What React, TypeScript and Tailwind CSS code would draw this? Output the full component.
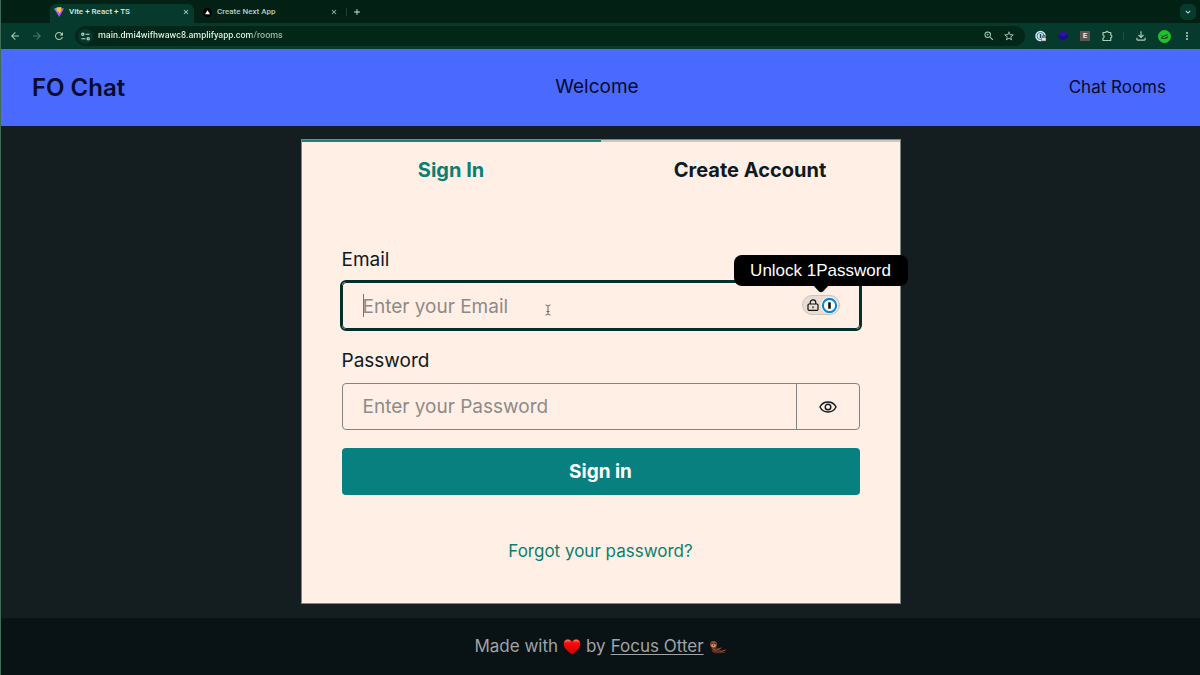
import React, { useState } from 'react';
import {
  MdAdd,
  MdArrowBack,
  MdArrowForward,
  MdClose,
  MdExpandMore,
  MdMoreVert,
  MdOutlineFileDownload,
  MdRefresh,
  MdStarBorder,
  MdZoomIn,
} from 'react-icons/md';

const ViteLogo = () => (
  <svg viewBox="0 0 20 20" className="size-[10px]" aria-hidden="true">
    <defs>
      <linearGradient id="vite" x1="0" y1="0" x2="0.6" y2="1">
        <stop offset="0" stopColor="#41c8ff" />
        <stop offset="0.5" stopColor="#9a5cf0" />
        <stop offset="1" stopColor="#d03cff" />
      </linearGradient>
    </defs>
    <path d="M0 3 L10 1 L20 3 L10.5 20 Z" fill="url(#vite)" />
    <path d="M5 1 L15 0 L13 6 L16 5.5 L9.5 15 L10 9 L6 9.5 Z" fill="#ffc61e" />
  </svg>
);

const NextLogo = () => (
  <svg viewBox="0 0 20 20" className="size-[9px]" aria-hidden="true">
    <circle cx="10" cy="10" r="10" fill="#000" />
    <path d="M10 5 L15.5 14 H4.5 Z" fill="#fff" />
  </svg>
);

const SiteInfoIcon = () => (
  <svg viewBox="0 0 20 20" className="size-[9px]" fill="none" stroke="#c3d6cb" strokeWidth="2.5" aria-hidden="true">
    <path d="M10 5 H19 M1 15 H10" />
    <circle cx="4" cy="5" r="2.5" />
    <circle cx="16" cy="15" r="2.5" />
  </svg>
);

const ExtensionIcon = () => (
  <svg viewBox="0 0 24 24" className="size-3" fill="none" stroke="#a9cdb8" strokeWidth="2.4" strokeLinejoin="round" aria-hidden="true">
    <path d="M4 5 H9.5 C9.5 2 14.5 2 14.5 5 H19.5 V10 C22.5 10 22.5 15 19.5 15 V21 H4 V16 C7 16 7 10 4 10 Z" />
  </svg>
);

const OnePasswordIcon = () => (
  <svg viewBox="0 0 24 24" className="size-3" aria-hidden="true">
    <circle cx="11" cy="12" r="10.5" fill="#d5eef5" />
    <circle cx="11" cy="12" r="7" fill="none" stroke="#2f7f94" strokeWidth="2" />
    <path d="M11 8 V16" stroke="#173e4c" strokeWidth="3" />
    <path d="M15 15 V13 A2.5 2.5 0 0 1 20 13 V15" fill="none" stroke="#33434a" strokeWidth="2" />
    <rect x="13" y="15" width="9" height="7" rx="1" fill="#e5e9ea" stroke="#33434a" strokeWidth="1" />
  </svg>
);

const HexIcon = () => (
  <svg viewBox="0 0 20 20" className="size-[10px]" aria-hidden="true">
    <path d="M10 1 L19 6 V14 L10 19 L1 14 V6 Z" fill="#1e0b86" />
    <path d="M10 1 L19 6 L10 11 L1 6 Z" fill="#3310b4" />
  </svg>
);

const Avatar = () => (
  <svg viewBox="0 0 26 26" className="size-[13px]" aria-hidden="true">
    <circle cx="13" cy="13" r="13" fill="#1fc22e" />
    <path d="M5 9 L10 12 L14 10 L20 8 L18 12 L21 15 L15 18 L8 18 L5 15 L9 14 Z" fill="#17521c" />
    <path d="M10 15 L17 13" stroke="#8bd892" strokeWidth="1.5" />
  </svg>
);

const LockIcon = () => (
  <svg viewBox="0 0 12 12" className="size-3" fill="none" stroke="#111" strokeWidth="1.2" aria-hidden="true">
    <rect x="1" y="5" width="10" height="6.3" rx="1" />
    <path d="M3.2 5 V3.6 A2.8 2.8 0 0 1 8.8 3.6 V5 M6 7.2 V9.2" />
  </svg>
);

const EyeIcon = () => (
  <svg viewBox="0 0 18 12" className="h-3 w-[18px]" fill="none" stroke="#0d1a1f" strokeWidth="1.4" aria-hidden="true">
    <path d="M1 6 C2.6 2.7 5.5 1 9 1 C12.5 1 15.4 2.7 17 6 C15.4 9.3 12.5 11 9 11 C5.5 11 2.6 9.3 1 6 Z" />
    <circle cx="9" cy="6" r="2.8" />
  </svg>
);

const HeartIcon = () => (
  <svg viewBox="0 0 24 22" className="h-4 w-[18px]" role="img" aria-label="love">
    <defs>
      <linearGradient id="heart" x1="0" y1="0" x2="0" y2="1">
        <stop offset="0" stopColor="#ff3b30" />
        <stop offset="0.3" stopColor="#f50a0a" />
        <stop offset="1" stopColor="#d60000" />
      </linearGradient>
    </defs>
    <path
      d="M12 21 C8 18 0.5 13.5 0.5 6.5 C0.5 2.5 3.5 0.5 6.5 0.5 C9 0.5 11 2 12 4 C13 2 15 0.5 17.5 0.5 C20.5 0.5 23.5 2.5 23.5 6.5 C23.5 13.5 16 18 12 21 Z"
      fill="url(#heart)"
    />
    <path d="M3 3.5 Q6 0.5 9 3 M15 3 Q18 0.5 21 3.5" fill="none" stroke="#ff9a92" strokeWidth="1.2" />
  </svg>
);

const OtterIcon = () => (
  <svg viewBox="0 0 36 26" className="h-[13px] w-[18px]" role="img" aria-label="otter">
    <path d="M9 11 C15 11 20 17 26 20 L34 23 L27 24 C20 25 9 25 7 22 C4 18 5 11 9 11 Z" fill="#5a3022" />
    <circle cx="9" cy="7" r="7" fill="#8a4b33" />
    <ellipse cx="9" cy="9" rx="4.5" ry="3.5" fill="#d39a78" />
    <circle cx="6" cy="5" r="1.2" fill="#1a0d08" />
    <circle cx="12" cy="5" r="1.2" fill="#1a0d08" />
    <ellipse cx="9" cy="8" rx="1.6" ry="1.1" fill="#1a0d08" />
    <path d="M8 15 L14 20 M17 17 L24 14 M24 21 L33 18" stroke="#a2583c" strokeWidth="2" strokeLinecap="round" />
  </svg>
);

const IBeam = () => (
  <svg viewBox="0 0 8 12" className="h-3 w-2" fill="none" stroke="#6b6764" strokeWidth="1" aria-hidden="true">
    <path d="M1.5 1 Q4 1 4 2.5 Q4 1 6.5 1 M4 2.5 V9.5 M1.5 11 Q4 11 4 9.5 Q4 11 6.5 11 M2.5 7.5 H5.5" />
  </svg>
);

const BrowserChrome: React.FC = () => (
  <div className="bg-[#022013] font-[Roboto,sans-serif] text-[#dbe9e1]">
    {/* Tab strip */}
    <div className="flex h-[23px] items-end pl-[49px] pr-1">
      <div className="flex h-[19px] w-[144px] items-center gap-1 rounded-t-md bg-[#053a2c] px-1 pb-[3px]">
        <button type="button" className="flex flex-1 items-center gap-[5px] text-[8px] font-medium">
          <ViteLogo />
          Vite + React + TS
        </button>
        <button type="button" aria-label="Close tab">
          <MdClose className="size-2" />
        </button>
      </div>
      <div className="flex h-[19px] w-[148px] items-center gap-1 pb-[3px] pl-[9px] pr-1">
        <button type="button" className="flex flex-1 items-center gap-[5px] text-[8px] font-medium text-[#b9cfc3]">
          <NextLogo />
          Create Next App
        </button>
        <button type="button" aria-label="Close tab">
          <MdClose className="size-2 text-[#b9cfc3]" />
        </button>
      </div>
      <div className="flex h-[19px] items-center gap-[5px] pb-[3px] pl-1">
        <span className="h-2 w-px bg-[#1c4233]" />
        <button type="button" aria-label="New tab">
          <MdAdd className="size-[10px]" />
        </button>
      </div>
      <button
        type="button"
        aria-label="Search tabs"
        className="mb-[3px] ml-auto flex size-4 items-center justify-center rounded-[5px] bg-[#053a2c]"
      >
        <MdExpandMore className="size-[10px]" />
      </button>
    </div>

    {/* Toolbar */}
    <div className="flex h-[26px] items-center gap-[10px] bg-[#053a2c] pl-2 pr-[7px]">
      <button type="button" aria-label="Back">
        <MdArrowBack className="size-3 text-[#a9cdb8]" />
      </button>
      <button type="button" aria-label="Forward">
        <MdArrowForward className="size-3 text-[#4c7766]" />
      </button>
      <button type="button" aria-label="Reload">
        <MdRefresh className="size-3 text-[#a9cdb8]" />
      </button>
      <div className="flex h-5 flex-1 items-center gap-[5px] rounded-full bg-[#022719] pl-[3px] pr-[10px]">
        <button
          type="button"
          aria-label="Site information"
          className="flex size-[15px] items-center justify-center rounded-full bg-[#05382a]"
        >
          <SiteInfoIcon />
        </button>
        <input
          type="text"
          aria-label="Address"
          defaultValue="main.dmi4wifhwawc8.amplifyapp.com/rooms"
          className="min-w-0 flex-1 bg-transparent bg-linear-to-r from-[#e6f1eb] from-[153px] to-[#9fbaac] to-[153px] bg-clip-text text-[9px] font-medium text-transparent outline-none"
        />
        <button type="button" aria-label="Zoom">
          <MdZoomIn className="size-3 text-[#a9cdb8]" />
        </button>
        <button type="button" aria-label="Bookmark" className="ml-[3px]">
          <MdStarBorder className="size-3 text-[#a9cdb8]" />
        </button>
      </div>
      <div className="flex items-center gap-[10px]">
        <button type="button" aria-label="1Password">
          <OnePasswordIcon />
        </button>
        <button type="button" aria-label="Extension" className="flex w-3 justify-center">
          <HexIcon />
        </button>
        <button
          type="button"
          className="mx-px flex size-[10px] items-center justify-center bg-[#5a5653] text-[8px] font-bold text-[#e5e2df]"
        >
          E
        </button>
        <button type="button" aria-label="Extensions">
          <ExtensionIcon />
        </button>
        <span className="h-2 w-px bg-[#1d5141]" />
        <button type="button" aria-label="Downloads">
          <MdOutlineFileDownload className="size-[14px] text-[#a9cdb8]" />
        </button>
        <button type="button" aria-label="Profile">
          <Avatar />
        </button>
        <button type="button" aria-label="Menu">
          <MdMoreVert className="size-3 text-[#a9cdb8]" />
        </button>
      </div>
    </div>
  </div>
);

const SignInCard: React.FC = () => {
  const [email, setEmail] = useState('');
  const [password, setPassword] = useState('');
  const [showPassword, setShowPassword] = useState(false);

  return (
    <div className="w-full max-w-[600px] border border-[#7c8588] bg-[#ffefe4] text-[#0d1a1f]">
      <div role="tablist" className="grid grid-cols-2 text-[20px] font-bold">
        <button
          type="button"
          role="tab"
          aria-selected="true"
          className="border-t-2 border-[#1f7f7a] pb-3 pt-[14px] leading-[28px] text-[#0a7f75]"
        >
          Sign In
        </button>
        <button
          type="button"
          role="tab"
          aria-selected="false"
          className="border-t-2 border-[#c9c8c6] pb-3 pt-[14px] leading-[28px]"
        >
          Create Account
        </button>
      </div>

      <form
        onSubmit={(e) => e.preventDefault()}
        className="flex flex-col gap-[18px] px-10 pb-[34px] pt-[50px] text-[19px] leading-[28px]"
      >
        <div className="flex flex-col gap-2">
          <label htmlFor="email">Email</label>
          <div className="relative">
            <input
              id="email"
              type="email"
              value={email}
              onChange={(e) => setEmail(e.target.value)}
              placeholder="Enter your Email"
              className="block h-[47px] w-full rounded-[4px] border border-[#04302c] px-5 pt-px outline-2 outline-[#04302c] placeholder:text-[#8d8b89]"
            />
            {/* Text caret and mouse pointer */}
            <span className="absolute left-[21px] top-3 h-[23px] w-px bg-[#77736f]" />
            <span className="absolute left-[202px] top-[22px]">
              <IBeam />
            </span>
            {/* 1Password badge */}
            <button
              type="button"
              aria-label="Unlock 1Password"
              className="absolute right-5 top-[13px] flex h-5 w-[38px] items-center justify-between rounded-full border border-[#cfc3bb] bg-[#eadcd3] pl-1 pr-px"
            >
              <LockIcon />
              <svg viewBox="0 0 32 32" className="size-[17px]" aria-hidden="true">
                <circle cx="16" cy="16" r="16" fill="#fff" />
                <circle cx="16" cy="16" r="12.5" fill="none" stroke="#0f84d2" strokeWidth="4" />
                <rect x="13.5" y="10" width="5" height="12" rx="1" fill="#10161c" />
              </svg>
            </button>
            <div
              role="tooltip"
              className="absolute -right-12 -top-[27px] flex h-[31px] w-[174px] items-center justify-center rounded-lg bg-black font-['Liberation_Sans',sans-serif] text-[17px] text-white"
            >
              Unlock 1Password
              <svg viewBox="0 0 16 8" className="absolute left-[79px] top-[30px] h-2 w-4" aria-hidden="true">
                <path d="M0 0 H16 L10 6.5 Q8 8 6 6.5 Z" fill="#000" />
              </svg>
            </div>
          </div>
        </div>

        <div className="flex flex-col gap-2">
          <label htmlFor="password">Password</label>
          <div className="flex h-[47px] rounded-[4px] border border-[#7f8587]">
            <input
              id="password"
              type={showPassword ? 'text' : 'password'}
              value={password}
              onChange={(e) => setPassword(e.target.value)}
              placeholder="Enter your Password"
              className="min-w-0 flex-1 px-5 pt-px outline-none placeholder:text-[#8d8b89]"
            />
            <button
              type="button"
              aria-label="Show password"
              onClick={() => setShowPassword(!showPassword)}
              className="flex w-[63px] items-center justify-center border-l border-[#7f8587]"
            >
              <EyeIcon />
            </button>
          </div>
        </div>

        <button type="submit" className="h-[47px] rounded-[4px] bg-[#08807f] pt-px font-bold text-white">
          Sign in
        </button>

        <div className="mt-5 flex justify-center">
          <button type="button" className="py-1 text-[17px] leading-[28px] text-[#0a7f6f]">
            Forgot your password?
          </button>
        </div>
      </form>
    </div>
  );
};

const App: React.FC = () => {
  return (
    <div className="flex min-h-screen flex-col border-l border-[#3f6b58] bg-[#141d1f] font-[Inter,sans-serif]">
      <BrowserChrome />

      <header className="flex h-[77px] items-center justify-between bg-[#4a69ff] pl-[31px] pr-[34px] text-[#070b2c]">
        <h1 className="text-[24px] font-semibold">FO Chat</h1>
        <p className="text-[19px]">Welcome</p>
        <a href="#rooms" className="text-[17px]">
          Chat Rooms
        </a>
      </header>

      <main className="flex flex-1 justify-center pb-[14px] pt-[13px]">
        <SignInCard />
      </main>

      <footer className="flex h-[58px] items-center justify-center gap-[5px] bg-[#091214] text-[17px] text-[#a0a4a6]">
        <span>Made with</span>
        <HeartIcon />
        <span>by</span>
        <a href="#focus-otter" className="underline underline-offset-2">
          Focus Otter
        </a>
        <OtterIcon />
      </footer>
    </div>
  );
};

export default App;
